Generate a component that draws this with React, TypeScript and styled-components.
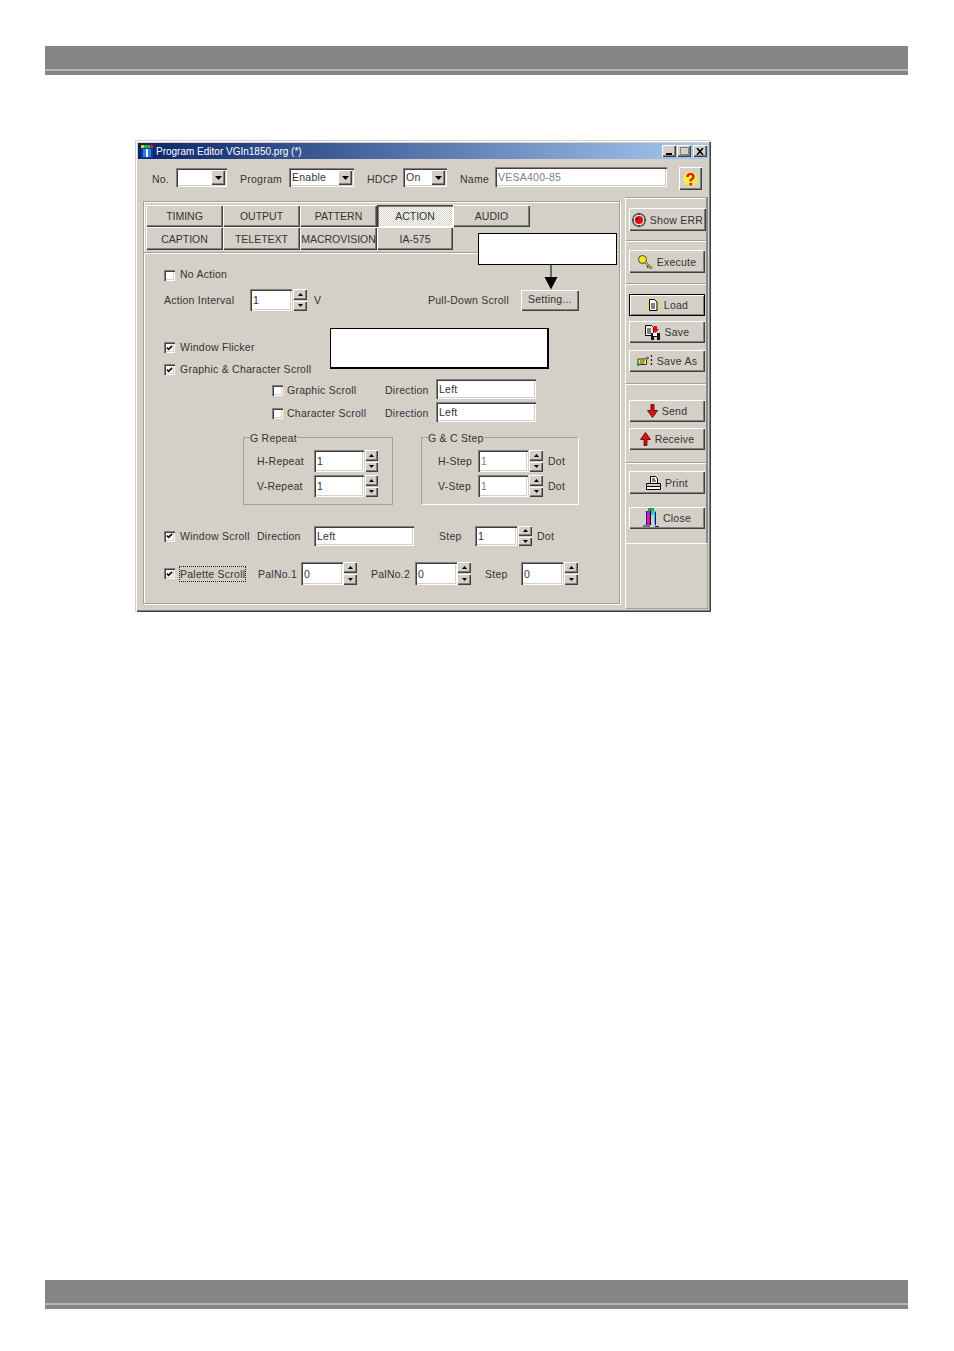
import React from "react";
import styled, { createGlobalStyle, css } from "styled-components";

const Global = createGlobalStyle`
  html, body { margin: 0; padding: 0; background: #fff; }
  * { box-sizing: border-box; }
`;

const face = "#d4d0c8";
const raised = css`
  background-color: ${face};
  box-shadow: inset 1px 1px 0 #fff, inset -1px -1px 0 #404040, inset -2px -2px 0 #808080;
`;
const sunken = css`
  background: #fff;
  box-shadow: inset 1px 1px 0 #808080, inset 2px 2px 0 #404040, inset -1px -1px 0 #fff, inset -2px -2px 0 ${face};
`;

const Page = styled.div`
  width: 954px;
  height: 1351px;
  padding-top: 46px;
  overflow: hidden;
  font-family: "Liberation Sans", Arial, sans-serif;
  font-size: 10.5px;
  letter-spacing: 0.25px;
  color: #333;
`;
const Bar = styled.div<{ $mt: number }>`
  width: 863px;
  height: 29px;
  margin: ${(p) => p.$mt}px 0 0 45px;
  background: linear-gradient(to bottom, #858585 0 23px, #b5b5b5 23px 25px, #858585 25px);
`;
const Win = styled.div`
  position: relative;
  width: 576px;
  height: 472px;
  margin: 65px 0 0 135px;
  padding: 3px;
  background: ${face};
  box-shadow: inset 1px 1px 0 ${face}, inset 2px 2px 0 #fff, inset -1px -1px 0 #404040, inset -2px -2px 0 #808080;
`;
const Title = styled.div`
  display: flex;
  align-items: center;
  height: 16px;
  padding: 0 1px 0 2px;
  background: linear-gradient(to right, #0a246a, #a6caf0);
  color: #fff;
  font-size: 10px;
  letter-spacing: 0;
`;
const TitleText = styled.span`
  margin-left: 2px;
  flex: 1;
  white-space: nowrap;
`;
const Caption = styled.button<{ $ml?: number }>`
  ${raised};
  width: 14px;
  height: 12px;
  border: 0;
  padding: 0;
  margin-left: ${(p) => p.$ml ?? 0}px;
  display: flex;
  align-items: center;
  justify-content: center;
`;
const Toolbar = styled.div`
  display: flex;
  align-items: flex-start;
  height: 38px;
  padding: 8px 0 0 14px;
`;
const Label = styled.span<{ $w?: number; $ml?: number; $h?: number; $focus?: boolean; $up?: boolean; $dn?: boolean }>`
  display: inline-block;
  flex: none;
  width: ${(p) => (p.$w ? `${p.$w}px` : "auto")};
  margin-left: ${(p) => p.$ml ?? 0}px;
  margin-bottom: ${(p) => (p.$up ? 2 : 0)}px;
  margin-top: ${(p) => (p.$dn ? 2 : 0)}px;
  height: ${(p) => p.$h ?? 14}px;
  line-height: ${(p) => p.$h ?? 14}px;
  white-space: nowrap;
  ${(p) => p.$focus && css`outline: 1px dotted #222; outline-offset: 0;`}
`;
const Combo = styled.div<{ $w: number }>`
  ${sunken};
  flex: none;
  width: ${(p) => p.$w}px;
  height: 19px;
  margin-top: 1px;
  padding-left: 3px;
  line-height: 19px;
  display: flex;
  justify-content: space-between;
`;
const ComboBtn = styled.span`
  ${raised};
  flex: none;
  width: 14px;
  height: 15px;
  margin: 2px 2px 0 0;
  display: flex;
  align-items: center;
  justify-content: center;
`;
const Field = styled.div<{ $w: number; $h?: number; $ml?: number; $dim?: boolean }>`
  ${sunken};
  flex: none;
  display: flex;
  align-items: center;
  width: ${(p) => p.$w}px;
  height: ${(p) => p.$h ?? 20}px;
  margin-left: ${(p) => p.$ml ?? 0}px;
  padding-left: 3px;
  color: ${(p) => (p.$dim ? "#808080" : "#333")};
  white-space: nowrap;
`;
const HelpBtn = styled.button`
  ${raised};
  width: 23px;
  height: 23px;
  margin-left: 12px;
  border: 0;
  padding: 0;
  display: flex;
  align-items: center;
  justify-content: center;
`;
const Main = styled.div`
  display: flex;
  height: 412px;
`;
const Left = styled.div`
  width: 487px;
  padding: 4px 0 0 5px;
`;
const Panel = styled.div`
  width: 477px;
  height: 403px;
  border: 1px solid #a3a09a;
  box-shadow: inset 1px 1px 0 #fff, 1px 1px 0 #fff;
`;
const TabGrid = styled.div`
  display: grid;
  grid-template-columns: 77px 77px 77px 76px 77px;
  grid-template-rows: 22px 23px;
  height: 50px;
  padding: 3px 2px 0;
`;
const Tab = styled.div<{ $active?: boolean }>`
  ${raised};
  display: flex;
  align-items: center;
  justify-content: center;
  white-space: nowrap;
  letter-spacing: 0;
  ${(p) =>
    p.$active &&
    css`
      background: repeating-conic-gradient(#fff 0 25%, ${face} 0 50%) 0 0 / 2px 2px;
      box-shadow: inset 1px 1px 0 #404040, inset 2px 2px 0 #808080, inset -1px -1px 0 #fff;
    `}
`;
const Content = styled.div`
  height: 351px;
  border-top: 1px solid #a3a09a;
  box-shadow: inset 0 1px 0 #fff;
  padding-left: 20px;
`;
const Row = styled.div<{ $mt: number; $h: number; $in?: number }>`
  display: flex;
  align-items: center;
  margin-top: ${(p) => p.$mt}px;
  height: ${(p) => p.$h}px;
  padding-left: ${(p) => p.$in ?? 0}px;
`;
const Check = styled.span<{ $dn?: boolean }>`
  ${sunken};
  flex: none;
  width: 11px;
  height: 11px;
  margin-top: ${(p) => (p.$dn ? 3 : 0)}px;
  display: inline-flex;
  align-items: center;
  justify-content: center;
`;
const SpinBox = styled.div<{ $ml?: number; $h?: number; $w?: number }>`
  flex: none;
  display: flex;
  flex-direction: column;
  gap: 1px;
  width: ${(p) => p.$w ?? 14}px;
  height: ${(p) => p.$h ?? 22}px;
  margin-left: ${(p) => p.$ml ?? 1}px;
`;
const SpinBtn = styled.span`
  ${raised};
  flex: 1;
  display: flex;
  align-items: center;
  justify-content: center;
`;
const Setting = styled.button`
  ${raised};
  width: 58px;
  height: 21px;
  border: 0;
  padding: 0 0 3px;
  font: inherit;
  letter-spacing: inherit;
  color: inherit;
`;
const Group = styled.fieldset<{ $w: number; $ml?: number; $pale?: boolean }>`
  flex: none;
  width: ${(p) => p.$w}px;
  height: 74px;
  margin: 0 0 0 ${(p) => p.$ml ?? 0}px;
  padding: 7px 0 0 12px;
  border: 1px solid #a3a09a;
  ${(p) => p.$pale && css`border-right-color: #fff; border-bottom-color: #fff;`}
  min-width: 0;
`;
const Legend = styled.legend`
  margin-left: -6px;
  padding: 0;
  height: 12px;
  line-height: 14px;
  white-space: nowrap;
`;
const GroupRow = styled.div<{ $mt?: number }>`
  display: flex;
  align-items: center;
  height: 22px;
  margin-top: ${(p) => p.$mt ?? 0}px;
`;
const Side = styled.div`
  width: 83px;
  height: 412px;
  display: flex;
  flex-direction: column;
`;
const Section = styled.div<{ $h: number; $pt: number; $last?: boolean }>`
  height: ${(p) => p.$h}px;
  padding: ${(p) => p.$pt}px 0 0 3px;
  border-top: 1px solid ${(p) => (p.$last ? "#fff" : "#a3a09a")};
  border-left: 1px solid #fff;
  border-right: 2px solid #8a8a86;
  box-shadow: inset 0 1px 0 #fff;
  ${(p) =>
    p.$last &&
    css`
      flex: 1;
      border-right-color: #a3a09a;
      border-bottom: 1px solid #a3a09a;
      border-right-width: 1px;
      box-shadow: none;
    `}
`;
const Btn = styled.button<{ $mt?: number; $h?: number; $w?: number; $def?: boolean }>`
  ${raised};
  display: flex;
  align-items: center;
  justify-content: center;
  gap: 4px;
  width: ${(p) => p.$w ?? 76}px;
  height: ${(p) => p.$h ?? 22}px;
  margin: ${(p) => p.$mt ?? 0}px 0 0 0;
  border: 0;
  padding: 0;
  font: inherit;
  letter-spacing: inherit;
  color: inherit;
  white-space: nowrap;
  ${(p) =>
    p.$def &&
    css`
      border: 1px solid #000;
      box-shadow: inset 1px 1px 0 #fff, inset -1px -1px 0 #808080;
    `}
`;
const Callout = styled.div<{ $l: number; $t: number; $w: number; $h: number; $thick?: boolean }>`
  position: absolute;
  left: ${(p) => p.$l}px;
  top: ${(p) => p.$t}px;
  width: ${(p) => p.$w}px;
  height: ${(p) => p.$h}px;
  background: #fff;
  border: 1px solid #000;
  ${(p) => p.$thick && css`border-right-width: 2px; border-bottom-width: 2px;`}
`;
const ArrowMark = styled.svg`
  position: absolute;
  left: 409px;
  top: 125px;
`;

const Down = () => (
  <svg width="7" height="4" viewBox="0 0 7 4"><path d="M0 0h7L3.500 4z" fill="#000" /></svg>
);
const SUp = () => (
  <svg width="5" height="3" viewBox="0 0 5 3"><path d="M2.500 0L5 3H0z" fill="#000" /></svg>
);
const SDown = () => (
  <svg width="5" height="3" viewBox="0 0 5 3"><path d="M0 0h5L2.500 3z" fill="#000" /></svg>
);
const Spin = ({ h, ml, w }: { h?: number; ml?: number; w?: number }) => (
  <SpinBox $h={h} $ml={ml} $w={w}>
    <SpinBtn><SUp /></SpinBtn>
    <SpinBtn><SDown /></SpinBtn>
  </SpinBox>
);
const Tick = () => (
  <svg width="7" height="6" viewBox="0 0 8 7"><path d="M1 3l2 2 4-4" fill="none" stroke="#111" strokeWidth="2" /></svg>
);
const AppIcon = () => (
  <svg width="14" height="14" viewBox="0 0 14 14">
    <rect x="1" y="2" width="12" height="12" fill="#0a3aa8" />
    <rect x="3" y="5" width="8" height="8" fill="#2f7fe0" />
    <path d="M4 1h6v3H4z" fill="#2fae3a" />
    <path d="M1 1h3v3H1z" fill="#d8d020" />
    <path d="M6 5h2v8H6z" fill="#fff" />
    <path d="M10 1h3v3h-3z" fill="#d02020" />
  </svg>
);
const IShow = () => (
  <svg width="14" height="14" viewBox="0 0 14 14">
    <circle cx="7" cy="7" r="7" fill="#555" />
    <circle cx="7" cy="7" r="5.500" fill="#ddd" />
    <circle cx="7" cy="7" r="4" fill="#e01010" />
    <path d="M4 5h2v2H4z" fill="#600" />
    <path d="M0 7h2M12 7h2M7 0v2M7 12v2" stroke="#222" />
  </svg>
);
const IKey = () => (
  <svg width="15" height="14" viewBox="0 0 15 14">
    <circle cx="4.500" cy="4.500" r="4" fill="#f4e820" stroke="#444" />
    <path d="M7 7l7 6.500M11 10.500l-2 2M13 12.500l-1 1" stroke="#555" strokeWidth="2.200" />
    <path d="M7 7l7 6.500" stroke="#f4e820" />
  </svg>
);
const ILoad = () => (
  <svg width="14" height="15" viewBox="0 0 14 15">
    <path d="M0 1l3 2M14 1l-3 2M0 13l3-2M14 13l-3-2M0 7h3M11 7h3" stroke="#f2ea30" strokeWidth="1.300" />
    <path d="M3.500 1.500h5l2.500 2.500v8.500h-7.500z" fill="#fff" stroke="#000" />
    <path d="M5 6h4M5 8h4M5 10h4" stroke="#000" />
  </svg>
);
const ISave = () => (
  <svg width="16" height="15" viewBox="0 0 16 15">
    <path d="M.5.500h6l2 2v8h-8z" fill="#fff" stroke="#000" />
    <path d="M2 4h4M2 6h4M2 8h4" stroke="#000" />
    <path d="M6 8h9v7H6z" fill="#111" />
    <path d="M8 8h4v3H8z" fill="#fff" />
    <path d="M9 12h3v3H9z" fill="#ccc" />
    <path d="M9 1h3v3h2l-3.500 4L7 4h2z" fill="#e01010" />
  </svg>
);
const ISaveAs = () => (
  <svg width="16" height="14" viewBox="0 0 16 14">
    <path d="M1 5h7l3-2 .5 1-2 2v4.500H2.500L1 9z" fill="#f6f050" stroke="#222" strokeWidth=".9" />
    <path d="M3 7h5M3 9h4" stroke="#222" strokeWidth=".8" />
    <path d="M0 9h2.500v3H0z" fill="#2a9a50" />
    <path d="M14.500 1v12" stroke="#222" strokeDasharray="2 2" strokeWidth="1.300" />
  </svg>
);
const ISend = () => (
  <svg width="11" height="14" viewBox="0 0 11 14">
    <path d="M4 .5h3v6h3.500L5.500 13.500.5 6.500H4z" fill="#e01010" stroke="#400" strokeWidth=".8" />
  </svg>
);
const IRecv = () => (
  <svg width="11" height="14" viewBox="0 0 11 14">
    <path d="M4 13.500h3v-6h3.500L5.500.5.5 7.500H4z" fill="#e01010" stroke="#400" strokeWidth=".8" />
  </svg>
);
const IPrint = () => (
  <svg width="15" height="14" viewBox="0 0 15 14">
    <path d="M4.500.5h5l2 2v5h-7z" fill="#fff" stroke="#000" />
    <path d="M6 3h3M6 5h4" stroke="#000" />
    <path d="M.5 7.500h14v3H.5z" fill="#ccc" stroke="#000" />
    <path d="M.5 10.500h14v3H.5z" fill="#fff" stroke="#000" />
  </svg>
);
const IClose = () => (
  <svg width="16" height="20" viewBox="0 0 16 20">
    <path d="M5 0h6v3H5z" fill="#2aa04a" />
    <path d="M3 3h4v14H3z" fill="#d018c0" />
    <path d="M7 3h1v14H7z" fill="#000" />
    <path d="M8 3h5v1h-1v13h-1V7H8z" fill="#20d0e8" />
    <path d="M3 3h1v14H3z" fill="#101080" />
    <path d="M12 4h1v13h-1z" fill="#101080" />
    <path d="M0 17h7v2H0z" fill="#707070" />
    <path d="M12 18h4v1h-4z" fill="#101080" />
  </svg>
);
const IHelp = () => (
  <svg width="15" height="16" viewBox="0 0 15 16">
    <circle cx="7.500" cy="8" r="7" fill="#f6ee40" />
    <path d="M4.500 6c0-4 6-4 6 0 0 2-3 2-3 4.500" fill="none" stroke="#e01010" strokeWidth="2.200" />
    <path d="M6.500 12h2.500v2.500H6.500z" fill="#e01010" />
  </svg>
);

const RepeatRow = ({ label, mt }: { label: string; mt?: number }) => (
  <GroupRow $mt={mt}>
    <Label $w={57} $ml={1}>{label}</Label>
    <Field $w={50} $h={22}>1</Field>
    <Spin w={13} />
  </GroupRow>
);
const StepRow = ({ label, mt }: { label: string; mt?: number }) => (
  <GroupRow $mt={mt}>
    <Label $w={40} $ml={4}>{label}</Label>
    <Field $w={50} $h={22} $dim>1</Field>
    <Spin />
    <Label $ml={5}>Dot</Label>
  </GroupRow>
);

export default function App() {
  return (
    <Page>
      <Global />
      <Bar $mt={0} />
      <Win>
        <Title>
          <AppIcon />
          <TitleText>Program Editor VGIn1850.prg (*)</TitleText>
          <Caption>
            <svg width="6" height="8" viewBox="0 0 6 8"><path d="M0 6h6v2H0z" fill="#000" /></svg>
          </Caption>
          <Caption $ml={1}>
            <svg width="9" height="8" viewBox="0 0 9 8"><path d="M.5.500h8v7h-8z" fill="none" stroke="#808080" /></svg>
          </Caption>
          <Caption $ml={2}>
            <svg width="8" height="7" viewBox="0 0 8 7"><path d="M1 0l6 7M7 0L1 7" stroke="#000" strokeWidth="1.600" /></svg>
          </Caption>
        </Title>
        <Toolbar>
          <Label $w={24} $h={24}>No.</Label>
          <Combo $w={51}><span /><ComboBtn><Down /></ComboBtn></Combo>
          <Label $w={49} $ml={13} $h={24}>Program</Label>
          <Combo $w={65}>Enable<ComboBtn><Down /></ComboBtn></Combo>
          <Label $w={36} $ml={13} $h={24}>HDCP</Label>
          <Combo $w={44}>On<ComboBtn><Down /></ComboBtn></Combo>
          <Label $w={35} $ml={13} $h={24}>Name</Label>
          <Field $w={172} $dim>VESA400-85</Field>
          <HelpBtn><IHelp /></HelpBtn>
        </Toolbar>
        <Main>
          <Left>
            <Panel>
              <TabGrid>
                <Tab>TIMING</Tab>
                <Tab>OUTPUT</Tab>
                <Tab>PATTERN</Tab>
                <Tab $active>ACTION</Tab>
                <Tab>AUDIO</Tab>
                <Tab>CAPTION</Tab>
                <Tab>TELETEXT</Tab>
                <Tab>MACROVISION</Tab>
                <Tab>IA-575</Tab>
              </TabGrid>
              <Content>
                <Row $mt={13} $h={18}>
                  <Check />
                  <Label $ml={5} $up>No Action</Label>
                </Row>
                <Row $mt={5} $h={22}>
                  <Label $w={86}>Action Interval</Label>
                  <Field $w={42} $h={22}>1</Field>
                  <Spin />
                  <Label $w={114} $ml={7}>V</Label>
                  <Label $w={93}>Pull-Down Scroll</Label>
                  <Setting>Setting...</Setting>
                </Row>
                <Row $mt={27} $h={19}>
                  <Check><Tick /></Check>
                  <Label $ml={5} $up>Window Flicker</Label>
                </Row>
                <Row $mt={3} $h={19}>
                  <Check><Tick /></Check>
                  <Label $ml={5} $up>Graphic &amp; Character Scroll</Label>
                </Row>
                <Row $mt={0} $h={20} $in={108}>
                  <Check $dn />
                  <Label $w={98} $ml={4} $dn>Graphic Scroll</Label>
                  <Label $w={51} $dn>Direction</Label>
                  <Field $w={100}>Left</Field>
                </Row>
                <Row $mt={3} $h={20} $in={108}>
                  <Check $dn />
                  <Label $w={98} $ml={4} $dn>Character Scroll</Label>
                  <Label $w={51} $dn>Direction</Label>
                  <Field $w={100}>Left</Field>
                </Row>
                <Row $mt={9} $h={74} $in={79}>
                  <Group $w={150}>
                    <Legend>G Repeat</Legend>
                    <RepeatRow label="H-Repeat" />
                    <RepeatRow label="V-Repeat" mt={3} />
                  </Group>
                  <Group $w={158} $ml={28} $pale>
                    <Legend>G &amp; C Step</Legend>
                    <StepRow label="H-Step" />
                    <StepRow label="V-Step" mt={3} />
                  </Group>
                </Row>
                <Row $mt={21} $h={20}>
                  <Check><Tick /></Check>
                  <Label $w={77} $ml={5}>Window Scroll</Label>
                  <Label $w={57}>Direction</Label>
                  <Field $w={100}>Left</Field>
                  <Label $w={36} $ml={25}>Step</Label>
                  <Field $w={42} $h={20}>1</Field>
                  <Spin h={20} />
                  <Label $ml={5}>Dot</Label>
                </Row>
                <Row $mt={16} $h={23}>
                  <Check><Tick /></Check>
                  <Label $w={65} $ml={5} $focus>Palette Scroll</Label>
                  <Label $w={43} $ml={13}>PalNo.1</Label>
                  <Field $w={42} $h={23}>0</Field>
                  <Spin h={23} ml={0} />
                  <Label $w={44} $ml={14}>PalNo.2</Label>
                  <Field $w={42} $h={23}>0</Field>
                  <Spin h={23} ml={0} />
                  <Label $w={36} $ml={14}>Step</Label>
                  <Field $w={42} $h={23}>0</Field>
                  <Spin h={23} />
                </Row>
              </Content>
            </Panel>
          </Left>
          <Side>
            <Section $h={43} $pt={10}>
              <Btn $w={77} $h={23}><IShow />Show ERR</Btn>
            </Section>
            <Section $h={43} $pt={9}>
              <Btn $h={23}><IKey />Execute</Btn>
            </Section>
            <Section $h={100} $pt={10}>
              <Btn $def><ILoad />Load</Btn>
              <Btn $mt={5}><ISave />Save</Btn>
              <Btn $mt={7}><ISaveAs />Save As</Btn>
            </Section>
            <Section $h={79} $pt={16}>
              <Btn><ISend />Send</Btn>
              <Btn $mt={6}><IRecv />Receive</Btn>
            </Section>
            <Section $h={81} $pt={8}>
              <Btn $h={23}><IPrint />Print</Btn>
              <Btn $mt={13}><IClose />Close</Btn>
            </Section>
            <Section $h={66} $pt={0} $last />
          </Side>
        </Main>
        <Callout $l={343} $t={93} $w={139} $h={32} />
        <ArrowMark width="14" height="25" viewBox="0 0 14 25">
          <path d="M7 0v13" stroke="#000" />
          <path d="M.5 12h13L7 24.500z" fill="#000" />
        </ArrowMark>
        <Callout $l={195} $t={188} $w={219} $h={41} $thick />
      </Win>
      <Bar $mt={668} />
    </Page>
  );
}
